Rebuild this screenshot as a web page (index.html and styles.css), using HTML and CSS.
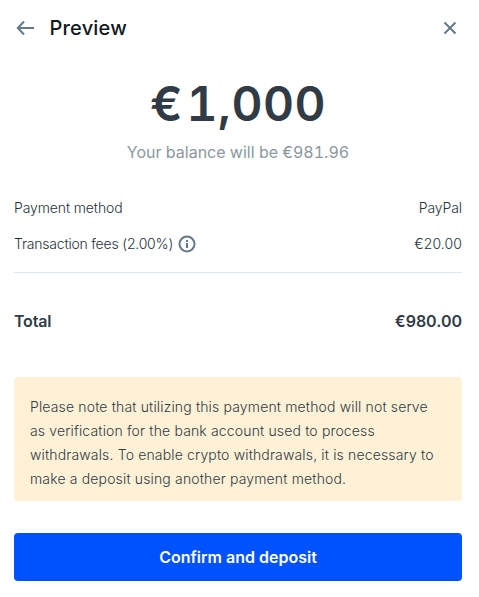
FILE: index.html
```html
<!DOCTYPE html>
<html lang="en">
<head>
<meta charset="utf-8">
<title>Preview</title>
<link rel="stylesheet" href="styles.css">
</head>
<body>
<main class="dialog">
  <header class="header">
    <svg class="icon back" viewBox="0 0 20 20"><path d="M18 10H2M8 3.500L1.800 10L8 16.500"/></svg>
    <h1 class="title">Preview</h1>
    <svg class="icon close" viewBox="0 0 20 20"><path d="M4.500 4.500l11 11M15.500 4.500l-11 11"/></svg>
  </header>
  <section class="summary">
    <div class="amount"><span class="currency">€</span>1,000</div>
    <div class="balance">Your balance will be €981.96</div>
  </section>
  <section class="details">
    <div class="row"><span class="label method">Payment method</span><span class="value">PayPal</span></div>
    <div class="row"><span class="label">Transaction fees (2.00%)<svg class="icon info" viewBox="0 0 20 20"><circle cx="10" cy="10" r="7.500"/><path d="M10 9v5M10 6v2"/></svg></span><span class="value price">€20.00</span></div>
  </section>
  <div class="total"><span class="total-label">Total</span><span>€980.00</span></div>
  <p class="notice">Please note that utilizing this payment method will not serve<br>as verification for the bank account used to process<br>withdrawals. To enable crypto withdrawals, it is necessary to<br>make a deposit using another payment method.</p>
  <button class="confirm">Confirm and deposit</button>
</main>
</body>
</html>
```

FILE: styles.css
```css
* { box-sizing: border-box; }
body { margin: 0; background: #fff; color: #303b45; font-family: Inter, sans-serif; }
.dialog { width: 479px; height: 597px; padding: 16px 17px 16px 14px; overflow: hidden; }
.header { display: flex; align-items: center; height: 24px; }
.icon { display: block; width: 20px; height: 20px; fill: none; stroke: #66788a; stroke-width: 2; flex: none; }
.back { margin-left: 2px; }
.title { margin: 0 auto 0 13.500px; font-size: 20px; line-height: 24px; font-weight: 550; letter-spacing: .2px; color: #101820; }
.close { margin-right: 2px; }
.summary { padding-top: 36px; text-align: center; }
.amount { height: 56px; font-size: 48px; line-height: 56px; font-weight: 600; letter-spacing: .5px; font-variant-numeric: tabular-nums; }
.currency { margin-right: 3.500px; }
.balance { margin-top: 8px; font-size: 16px; line-height: 24px; color: #8a989e; font-variant-numeric: tabular-nums; }
.details { padding-top: 31px; height: 109px; border-bottom: 1px solid #dce7f0; }
.row { display: flex; justify-content: space-between; align-items: center; height: 24px; margin-bottom: 12px; font-size: 14px; font-weight: 350; color: #26323b; }
.label { display: flex; align-items: center; gap: 4px; letter-spacing: -.2px; }
.method { letter-spacing: -.12px; }
.info { margin-top: 2px; }
.value { letter-spacing: -.1px; }
.price { letter-spacing: .1px; }
.total { display: flex; justify-content: space-between; margin-top: 36px; font-size: 16px; line-height: 24px; font-weight: 600; }
.total-label { letter-spacing: -.2px; }
.notice { height: 124px; margin: 44px 0 32px; padding: 18px 16px; border-radius: 4px; background: #fff1d6; font-size: 14px; font-weight: 300; letter-spacing: .15px; line-height: 24px; white-space: nowrap; }
.confirm { display: block; width: 100%; height: 48px; border: 0; border-radius: 4px; background: #0052ff; color: #fff; font: 600 16px/24px Inter, sans-serif; }
```
